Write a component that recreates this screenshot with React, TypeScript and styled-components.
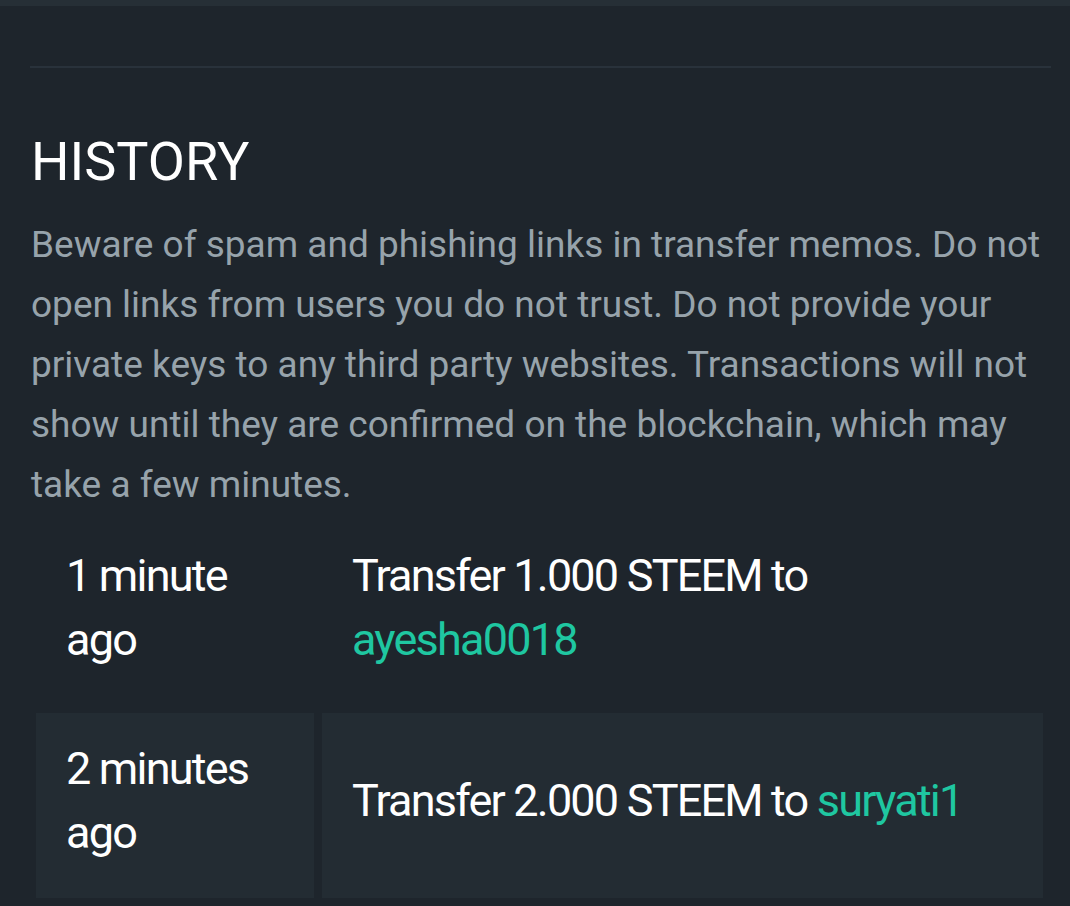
import React from "react";
import styled, { createGlobalStyle } from "styled-components";

type Transfer = {
	ago: string;
	amount: string;
	to: string;
};

const transfers: Transfer[] = [
	{ ago: "1 minute ago", amount: "1.000 STEEM", to: "ayesha0018" },
	{ ago: "2 minutes ago", amount: "2.000 STEEM", to: "suryati1" },
];

const GlobalStyle = createGlobalStyle`
	html, body {
		margin: 0;
		background: #1e252c;
	}
	body {
		font-family: Roboto, "Liberation Sans", sans-serif;
	}
`;

const TopStrip = styled.div`
	height: 6px;
	background: #262f36;
`;

const Page = styled.div`
	padding: 0 20px 0 31px;
`;

const Divider = styled.hr`
	margin: 60px -1px 0 -1px;
	border: none;
	height: 2px;
	background: #29323b;
`;

const Title = styled.h2`
	margin: 62px 0 0;
	font-size: 54px;
	font-weight: 400;
	line-height: 64px;
	color: #ffffff;
`;

const Notice = styled.p`
	margin: 21px 0 0;
	font-size: 37px;
	line-height: 60px;
	color: #97a3ab;
`;

const Table = styled.table`
	margin: -3px 0 0 -3px;
	width: calc(100% + 4px);
	border-collapse: separate;
	border-spacing: 8px;
`;

const Row = styled.tr<{ $striped: boolean }>`
	td {
		background: ${(p) => (p.$striped ? "#232c33" : "transparent")};
	}
`;

const Cell = styled.td<{ $narrow?: boolean }>`
	height: 185px;
	box-sizing: border-box;
	padding: 0 30px 9px;
	width: ${(p) => (p.$narrow ? "278px" : "auto")};
	font-size: 45px;
	line-height: 64px;
	color: #ffffff;
	vertical-align: middle;
	letter-spacing: -1.8px;
`;

const Account = styled.a`
	color: #1fc7a1;
	text-decoration: none;
`;

const App: React.FC = () => {
	return (
		<>
			<GlobalStyle />
			<TopStrip />
			<Page>
				<Divider />
				<Title>HISTORY</Title>
				<Notice>
					Beware of spam and phishing links in transfer memos. Do not open links
					from users you do not trust. Do not provide your private keys to any
					third party websites. Transactions will not show until they are
					confirmed on the blockchain, which may take a few minutes.
				</Notice>
				<Table>
					<tbody>
						{transfers.map((t, i) => (
							<Row key={t.to} $striped={i % 2 === 1}>
								<Cell $narrow>{t.ago}</Cell>
								<Cell>
									Transfer {t.amount} to <Account href="#">{t.to}</Account>
								</Cell>
							</Row>
						))}
					</tbody>
				</Table>
			</Page>
		</>
	);
};

export default App;
